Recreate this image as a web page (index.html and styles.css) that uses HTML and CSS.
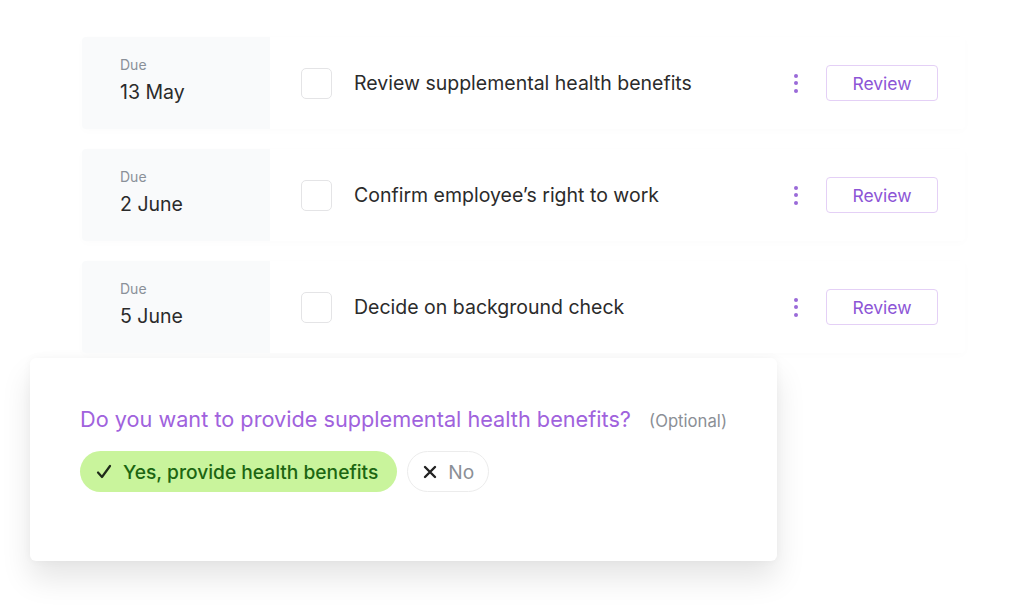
FILE: index.html
```html
<!DOCTYPE html>
<html lang="en">
<head>
  <meta charset="UTF-8">
  <meta name="viewport" content="width=device-width, initial-scale=1">
  <title>Onboarding tasks</title>
  <link rel="stylesheet" href="styles.css">
</head>
<body>
  <div class="tasks">
    <div class="task">
      <div class="due">
        <span class="due-label">Due</span>
        <span class="due-date">13 May</span>
      </div>
      <span class="check"></span>
      <span class="task-title">Review supplemental health benefits</span>
      <span class="kebab"><i></i><i></i><i></i></span>
      <button class="review">Review</button>
    </div>
    <div class="task">
      <div class="due">
        <span class="due-label">Due</span>
        <span class="due-date">2 June</span>
      </div>
      <span class="check"></span>
      <span class="task-title">Confirm employee’s right to work</span>
      <span class="kebab"><i></i><i></i><i></i></span>
      <button class="review">Review</button>
    </div>
    <div class="task">
      <div class="due">
        <span class="due-label">Due</span>
        <span class="due-date">5 June</span>
      </div>
      <span class="check"></span>
      <span class="task-title">Decide on background check</span>
      <span class="kebab"><i></i><i></i><i></i></span>
      <button class="review">Review</button>
    </div>
  </div>

  <div class="question-card">
    <p class="question">Do you want to provide supplemental health benefits? <span class="optional">(Optional)</span></p>
    <div class="answers">
      <button class="pill pill-yes">
        <svg width="16" height="16" viewBox="0 0 16 16"><polyline points="2,8.5 6,13 14,2" fill="none" stroke="#1f2a1a" stroke-width="2.2" stroke-linecap="round" stroke-linejoin="round"/></svg>
        Yes, provide health benefits
      </button>
      <button class="pill pill-no">
        <svg width="14" height="14" viewBox="0 0 14 14"><path d="M2 2 L12 12 M12 2 L2 12" stroke="#222" stroke-width="2.4" stroke-linecap="round"/></svg>
        No
      </button>
    </div>
  </div>
</body>
</html>
```

FILE: styles.css
```css
body {
  margin: 0;
  padding-bottom: 50px;
  background: #ffffff;
  font-family: Inter, "Noto Sans", sans-serif;
  color: #2b2b2b;
}

.tasks {
  padding: 37px 0 0 82px;
  display: flex;
  flex-direction: column;
  gap: 20px;
}

.task {
  width: 883px;
  height: 92px;
  display: flex;
  align-items: center;
  background: #fff;
  border-radius: 4px;
  box-shadow: 0 2px 10px rgba(0, 0, 0, 0.015);
}

.due {
  width: 188px;
  height: 100%;
  box-sizing: border-box;
  padding: 0 0 6px 38px;
  background: #f9fafb;
  border-radius: 4px 0 0 4px;
  display: flex;
  flex-direction: column;
  justify-content: center;
  gap: 7px;
}

.due-label {
  font-size: 14px;
  color: #8a9099;
}

.due-date {
  font-size: 19.5px;
  color: #2b2b2b;
}

.check {
  width: 29px;
  height: 29px;
  margin-left: 31px;
  border: 1.5px solid #e4e4e6;
  border-radius: 5px;
  flex-shrink: 0;
}

.task-title {
  margin-left: 22px;
  font-size: 19.5px;
  flex: 1;
}

.kebab {
  display: flex;
  flex-direction: column;
  gap: 3.5px;
  margin-right: 28px;
}

.kebab i {
  width: 4px;
  height: 4px;
  border-radius: 50%;
  background: #9a6ad8;
}

.review {
  width: 112px;
  height: 36px;
  margin-right: 27px;
  background: #fff;
  border: 1px solid #e4d0f6;
  border-radius: 4px;
  font-family: inherit;
  font-size: 17.5px;
  color: #8d55d6;
}

.question-card {
  width: 747px;
  height: 203px;
  box-sizing: border-box;
  margin: 5px 0 0 30px;
  padding: 48px 0 0 50px;
  background: #fff;
  border-radius: 6px;
  box-shadow: 0 18px 30px rgba(0, 0, 0, 0.1), 0 0 8px rgba(0, 0, 0, 0.04);
}

.question {
  margin: 0;
  font-size: 21.7px;
  color: #a062dd;
}

.optional {
  margin-left: 12px;
  font-size: 16.7px;
  color: #8b8f96;
}

.answers {
  display: flex;
  gap: 10px;
  margin-top: 19px;
}

.pill {
  height: 41px;
  display: flex;
  align-items: center;
  gap: 11px;
  border-radius: 21px;
  font-family: inherit;
  font-size: 19.2px;
}

.pill-yes {
  padding: 0 19px 0 16px;
  background: #c9f49c;
  border: none;
  color: #1c6612;
  font-weight: 500;
}

.pill-no {
  padding: 0 14px 0 15px;
  background: #fff;
  border: 1px solid #ececec;
  color: #8b8f96;
}
```
